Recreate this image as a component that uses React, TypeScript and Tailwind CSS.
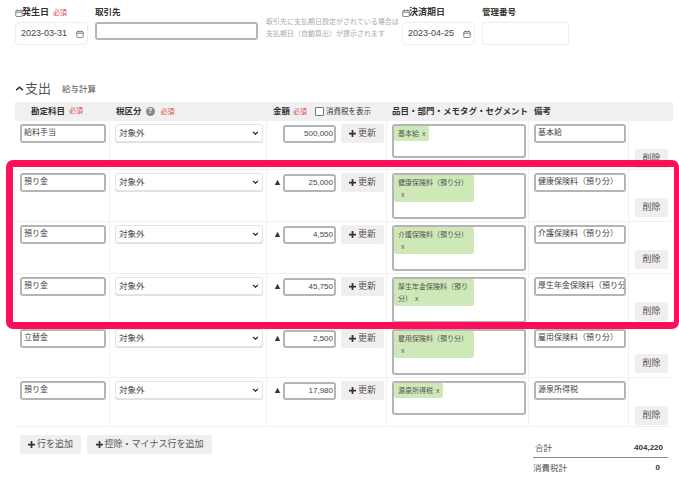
import React from "react";

const font = { fontFamily: '"Liberation Sans","Noto Sans CJK JP",sans-serif' };

function Req() {
  return <span className="text-[7px] font-normal text-[#e0494b]">必須</span>;
}

function Cal({ className = "" }: { className?: string }) {
  return (
    <svg viewBox="0 0 10 10" className={"h-[8px] w-[8px] shrink-0 " + className} fill="none" stroke="#666" strokeWidth="1">
      <rect x="1" y="2" width="8" height="7.4" rx="0.8" />
      <path d="M1 4h8M3 0.6v2M7 0.6v2" />
    </svg>
  );
}

function Plus() {
  return (
    <svg viewBox="0 0 8 8" className="h-[7px] w-[7px] shrink-0" fill="#333">
      <path d="M3 0h2v3h3v2H5v3H3V5H0V3h3z" />
    </svg>
  );
}

function Btn({ children, className = "" }: { children: React.ReactNode; className?: string }) {
  return (
    <button className={"flex h-[19px] items-center justify-center gap-[2px] rounded-[2px] bg-[#f0eeee] text-[9px] text-[#555] " + className}>
      {children}
    </button>
  );
}

function TextBox({ value, className = "" }: { value: string; className?: string }) {
  return (
    <div className={"h-[19px] overflow-hidden whitespace-nowrap rounded-[3px] border-2 border-[#b5b5b5] bg-white pl-[2px] text-[8px] leading-[14px] text-[#444] " + className}>
      {value}
    </div>
  );
}

type Row = { account: string; neg: boolean; amount: string; tag: string; tagW: string; note: string; short: boolean };

const rows: Row[] = [
  { account: "給料手当", neg: false, amount: "500,000", tag: "基本給", tagW: "w-fit", note: "基本給", short: true },
  { account: "預り金", neg: true, amount: "25,000", tag: "健康保険料（預り分）", tagW: "w-[80px]", note: "健康保険料（預り分）", short: false },
  { account: "預り金", neg: true, amount: "4,550", tag: "介護保険料（預り分）", tagW: "w-[80px]", note: "介護保険料（預り分）", short: false },
  { account: "預り金", neg: true, amount: "45,750", tag: "厚生年金保険料（預り分）", tagW: "w-[80px]", note: "厚生年金保険料（預り分）", short: false },
  { account: "立替金", neg: true, amount: "2,500", tag: "雇用保険料（預り分）", tagW: "w-[80px]", note: "雇用保険料（預り分）", short: false },
  { account: "預り金", neg: true, amount: "17,980", tag: "源泉所得税", tagW: "w-fit", note: "源泉所得税", short: true },
];

function DateField({ value }: { value: string }) {
  return (
    <div className="flex h-[23px] w-[73px] items-center justify-between rounded-[4px] border border-[#eeeeee] bg-white pl-[5px] pr-[3px] text-[9px] text-[#444]">
      <span>{value}</span>
      <Cal />
    </div>
  );
}

export default function App() {
  return (
    <div className="relative h-[488px] w-[679px] overflow-hidden bg-white text-[#333]" style={font}>
      {/* top form */}
      <div className="flex h-[102px] pl-[15px] pt-[7px]">
        <div className="w-[80px]">
          <div className="flex h-[11px] items-center text-[9px] font-bold leading-none">
            <Cal className="mr-[-1px]" />
            <span>発生日</span>
            <span className="ml-[4px]"><Req /></span>
          </div>
          <div className="mt-[4px]"><DateField value="2023-03-31" /></div>
        </div>
        <div className="w-[171px]">
          <div className="h-[11px] text-[8.5px] font-bold leading-[11px]">取引先</div>
          <div className="mt-[4px] h-[18px] w-[163px] rounded-[3px] border-2 border-[#b5b5b5] bg-white" />
        </div>
        <div className="w-[136px] pt-[9px] text-[7px] leading-[12px] text-[#aaaaaa]">
          <div className="whitespace-nowrap">取引先に支払期日設定がされている場合は</div>
          <div className="whitespace-nowrap">支払期日（自動算出）が提示されます</div>
        </div>
        <div className="w-[80px]">
          <div className="flex h-[11px] items-center text-[9px] font-bold leading-none">
            <Cal className="mr-[-1px]" />
            <span>決済期日</span>
          </div>
          <div className="mt-[4px]"><DateField value="2023-04-25" /></div>
        </div>
        <div className="w-[87px]">
          <div className="h-[11px] text-[8.5px] font-bold leading-[11px]">管理番号</div>
          <div className="mt-[4px] h-[23px] w-[87px] rounded-[3px] border border-[#eeeee8] bg-white" />
        </div>
      </div>

      {/* section heading (sits in the form's bottom space) */}
      <div className="absolute left-[15px] top-[79px] flex h-[18px] items-center">
        <svg viewBox="0 0 10 6" className="h-[5px] w-[9px]" fill="none" stroke="#333" strokeWidth="1.8">
          <path d="M1 5l4-3.6L9 5" />
        </svg>
        <span className="ml-[1px] text-[13px] leading-none text-[#555]">支出</span>
        <span className="ml-[11px] mt-[2px] text-[8.5px] text-[#555]">給与計算</span>
      </div>

      {/* table */}
      <div className="ml-[15px] w-[658px]">
        <div className="grid h-[19px] grid-cols-[95px_157px_120px_142px_100px_44px] items-center bg-[#f0f0f0] text-[8.5px] font-bold">
          <div className="flex items-center gap-[4px] pl-[16px]">勘定科目<Req /></div>
          <div className="flex items-center pl-[6px]">
            税区分
            <span className="ml-[4px] flex h-[9px] w-[9px] items-center justify-center rounded-full bg-[#888] text-[7px] text-white">?</span>
            <span className="ml-[6px]"><Req /></span>
          </div>
          <div className="flex items-center whitespace-nowrap pl-[6px]">
            金額
            <span className="ml-[3px]"><Req /></span>
            <span className="ml-[8px] h-[9px] w-[9px] rounded-[1px] border border-[#777] bg-white" />
            <span className="ml-[2px] text-[7.5px] font-normal">消費税を表示</span>
          </div>
          <div className="whitespace-nowrap pl-[5px]">品目・部門・メモタグ・セグメント</div>
          <div className="pl-[5px]">備考</div>
          <div />
        </div>
        {rows.map((r, i) => (
          <div key={i} className={"grid grid-cols-[95px_157px_120px_142px_100px_44px] border-b border-[#f0f0f0] " + (r.short ? "h-[49px]" : "h-[52px]")}>
            <div className="border-r border-[#f2f2f2] pl-[5px] pt-[3px]">
              <TextBox value={r.account} className="w-[86px]" />
            </div>
            <div className="border-r border-[#f2f2f2] pl-[5px] pt-[3px]">
              <div className="flex h-[18px] w-[148px] items-center justify-between rounded-[3px] border border-[#e4e4e4] bg-white pl-[3px] pr-[3px] text-[8.5px] text-[#444] shadow-[0_1px_1px_#ddd]">
                <span>対象外</span>
                <svg viewBox="0 0 8 5" className="h-[4px] w-[7px]" fill="none" stroke="#222" strokeWidth="1.5">
                  <path d="M1 1l3 3 3-3" />
                </svg>
              </div>
            </div>
            <div className="flex items-start border-r border-[#f2f2f2] pl-[6px] pt-[3px]">
              <span className="flex h-[19px] w-[10px] items-center text-[9px] text-[#333]">{r.neg ? "▲" : ""}</span>
              <div className="mt-[1px] flex h-[18px] w-[53px] items-center justify-end rounded-[3px] border-2 border-[#b5b5b5] bg-white pr-[1px] text-[8px] text-[#444]">
                {r.amount}
              </div>
              <Btn className="ml-[5px] w-[43px]"><Plus />更新</Btn>
            </div>
            <div className="border-r border-[#f2f2f2] pl-[5px] pt-[3px]">
              <div className={"w-[134px] overflow-hidden rounded-[3px] border-2 border-[#b5b5b5] bg-white " + (r.short ? "h-[34px]" : "h-[46px]")}>
                <div className={"rounded-[2px] bg-[#cfe8b8] py-[1.5px] pl-[4px] pr-[3px] text-[7px] leading-[12px] text-[#555] " + r.tagW}>
                  {r.tag}
                  <span className="ml-[3px] inline-block">x</span>
                </div>
              </div>
            </div>
            <div className="border-r border-[#f2f2f2] pl-[5px] pt-[3px]">
              <TextBox value={r.note} className="w-[92px]" />
            </div>
            <div className={"flex items-end pl-[6px] " + (r.short ? "pb-[1px]" : "pb-[4px]")}>
              <Btn className="w-[33px]">削除</Btn>
            </div>
          </div>
        ))}
      </div>

      {/* footer */}
      <div className="flex justify-between pl-[20px] pr-[11px] pt-[8px]">
        <div className="flex gap-[6px]">
          <Btn className="w-[61px]"><Plus />行を追加</Btn>
          <Btn className="w-[125px]"><Plus />控除・マイナス行を追加</Btn>
        </div>
        <div className="w-[135px] pt-[4px] text-[8.5px] text-[#555]">
          <div className="flex h-[19px] items-center justify-between border-b border-[#888] pl-[2px] pr-[5px]">
            <span>合計</span>
            <span className="text-[8px] font-bold text-[#333]">404,220</span>
          </div>
          <div className="flex h-[20px] items-center justify-between pr-[8px]">
            <span>消費税計</span>
            <span className="text-[8px] font-bold text-[#333]">0</span>
          </div>
        </div>
      </div>

      {/* highlight frame over the rows */}
      <div className="pointer-events-none absolute left-[6px] top-[160px] h-[169px] w-[673px] rounded-[7px] border-[7px] border-r-[5px] border-[#ff0f59]" />
    </div>
  );
}
